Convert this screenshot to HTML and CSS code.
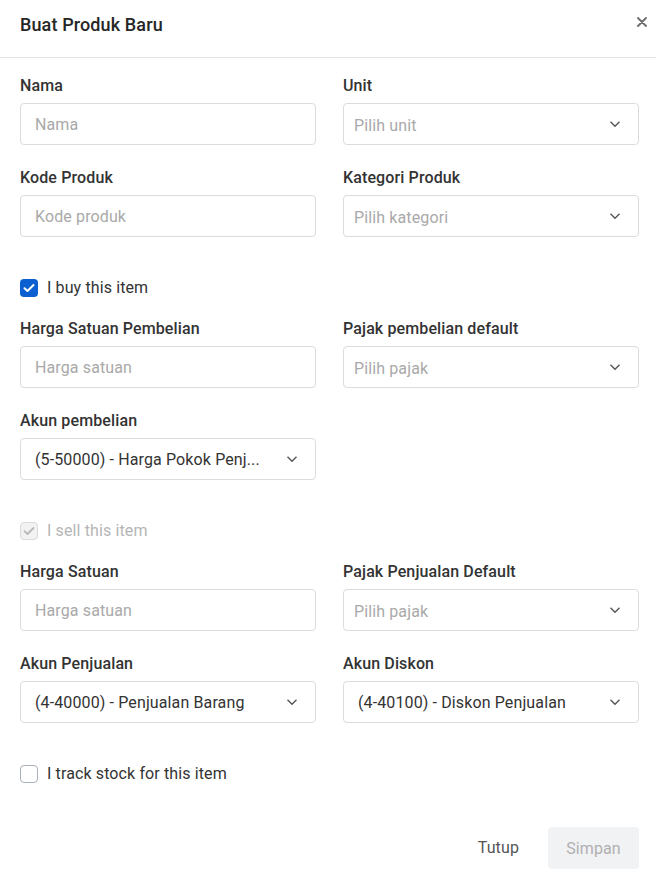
FILE: index.html
```html
<!DOCTYPE html>
<html lang="id">
<head>
<meta charset="utf-8">
<title>Buat Produk Baru</title>
<link rel="stylesheet" href="styles.css">
</head>
<body>
<div class="modal">
  <div class="modal-header">
    <h1 class="title">Buat Produk Baru</h1>
    <span class="close" aria-label="Close">
      <svg width="10" height="10" viewBox="0 0 10 10"><path d="M1 1L9 9M9 1L1 9" stroke="#6b6b6b" stroke-width="1.8" stroke-linecap="round"/></svg>
    </span>
  </div>
  <div class="modal-body">
    <div class="grid">
      <div class="field">
        <div class="label">Nama</div>
        <div class="control"><span class="ph">Nama</span></div>
      </div>
      <div class="field">
        <div class="label">Unit</div>
        <div class="control select"><span class="ph">Pilih unit</span><svg class="chev" width="12" height="8" viewBox="0 0 12 8"><path d="M1.5 1.8L6 6.2L10.5 1.8" fill="none" stroke="#555" stroke-width="1.4"/></svg></div>
      </div>
      <div class="field">
        <div class="label">Kode Produk</div>
        <div class="control"><span class="ph">Kode produk</span></div>
      </div>
      <div class="field">
        <div class="label">Kategori Produk</div>
        <div class="control select"><span class="ph">Pilih kategori</span><svg class="chev" width="12" height="8" viewBox="0 0 12 8"><path d="M1.5 1.8L6 6.2L10.5 1.8" fill="none" stroke="#555" stroke-width="1.4"/></svg></div>
      </div>
    </div>

    <div class="check-row">
      <span class="box checked"><svg width="12" height="10" viewBox="0 0 12 10"><path d="M1.5 5.2L4.5 8L10.5 2" fill="none" stroke="#fff" stroke-width="2" stroke-linecap="round" stroke-linejoin="round"/></svg></span>
      <span class="check-text">I buy this item</span>
    </div>

    <div class="grid after-check">
      <div class="field">
        <div class="label">Harga Satuan Pembelian</div>
        <div class="control"><span class="ph">Harga satuan</span></div>
      </div>
      <div class="field">
        <div class="label">Pajak pembelian default</div>
        <div class="control select"><span class="ph">Pilih pajak</span><svg class="chev" width="12" height="8" viewBox="0 0 12 8"><path d="M1.5 1.8L6 6.2L10.5 1.8" fill="none" stroke="#555" stroke-width="1.4"/></svg></div>
      </div>
      <div class="field">
        <div class="label">Akun pembelian</div>
        <div class="control select"><span class="val ellipsis">(5-50000) - Harga Pokok Penj...</span><svg class="chev" width="12" height="8" viewBox="0 0 12 8"><path d="M1.5 1.8L6 6.2L10.5 1.8" fill="none" stroke="#555" stroke-width="1.4"/></svg></div>
      </div>
    </div>

    <div class="check-row">
      <span class="box disabled"><svg width="12" height="10" viewBox="0 0 12 10"><path d="M1.5 5.2L4.5 8L10.5 2" fill="none" stroke="#b8b8b8" stroke-width="1.8" stroke-linecap="round" stroke-linejoin="round"/></svg></span>
      <span class="check-text muted">I sell this item</span>
    </div>

    <div class="grid after-check">
      <div class="field">
        <div class="label">Harga Satuan</div>
        <div class="control"><span class="ph">Harga satuan</span></div>
      </div>
      <div class="field">
        <div class="label">Pajak Penjualan Default</div>
        <div class="control select"><span class="ph">Pilih pajak</span><svg class="chev" width="12" height="8" viewBox="0 0 12 8"><path d="M1.5 1.8L6 6.2L10.5 1.8" fill="none" stroke="#555" stroke-width="1.4"/></svg></div>
      </div>
      <div class="field">
        <div class="label">Akun Penjualan</div>
        <div class="control select"><span class="val">(4-40000) - Penjualan Barang</span><svg class="chev" width="12" height="8" viewBox="0 0 12 8"><path d="M1.5 1.8L6 6.2L10.5 1.8" fill="none" stroke="#555" stroke-width="1.4"/></svg></div>
      </div>
      <div class="field">
        <div class="label">Akun Diskon</div>
        <div class="control select"><span class="val">(4-40100) - Diskon Penjualan</span><svg class="chev" width="12" height="8" viewBox="0 0 12 8"><path d="M1.5 1.8L6 6.2L10.5 1.8" fill="none" stroke="#555" stroke-width="1.4"/></svg></div>
      </div>
    </div>

    <div class="check-row">
      <span class="box empty"></span>
      <span class="check-text">I track stock for this item</span>
    </div>

    <div class="footer">
      <span class="btn-text">Tutup</span>
      <span class="btn-disabled">Simpan</span>
    </div>
  </div>
</div>
</body>
</html>
```
FILE: styles.css
```css
* { box-sizing: border-box; }
html, body { margin: 0; padding: 0; background: #fff; }
body {
  font-family: Roboto, "Noto Sans", sans-serif;
  color: #262626;
  width: 656px;
  letter-spacing: 0.12px;
}
.modal { width: 656px; }
.modal-header {
  height: 58px;
  border-bottom: 1px solid #e3e3e3;
  display: flex;
  align-items: flex-start;
  justify-content: space-between;
  padding: 0 9px 0 20px;
}
.title {
  margin: 0;
  font-size: 18px;
  font-weight: 500;
  line-height: 22px;
  padding-top: 14px;
  color: #262626;
}
.close {
  display: flex;
  padding-top: 17px;
}
.modal-body {
  padding: 18px 17px 21px 20px;
}
.grid {
  display: grid;
  grid-template-columns: 296px 296px;
  column-gap: 27px;
  row-gap: 23px;
}
.grid.after-check { margin-top: 21px; }
.field { display: flex; flex-direction: column; }
.label {
  font-size: 16px;
  font-weight: 500;
  line-height: 20px;
  color: #333;
  margin-bottom: 7px;
  padding-top: 1px;
  margin-top: -1px;
}
.control {
  height: 42px;
  border: 1px solid #dcdcdc;
  border-radius: 4px;
  display: flex;
  align-items: center;
  padding: 0 14px;
  font-size: 16px;
  background: #fff;
}
.control.select { padding: 0 17px 0 10px; justify-content: space-between; }
.control.select .val { padding-left: 4px; }
.ph { color: #a9a9a9; }
.control.select .ph { margin-top: 2px; }
.val { color: #333; }
.ellipsis { white-space: nowrap; overflow: hidden; }
.chev { flex: none; }
.check-row {
  display: flex;
  align-items: center;
  height: 20px;
  margin-top: 41px;
}
.box {
  width: 18px;
  height: 18px;
  border-radius: 4px;
  display: flex;
  align-items: center;
  justify-content: center;
  margin-right: 9px;
  flex: none;
}
.box.checked { background: #0b5fd0; }
.box.disabled { background: #f2f2f2; border: 1px solid #dadada; }
.box.empty { border: 1px solid #a8b0ba; background: #fff; }
.check-text { font-size: 16px; color: #333; line-height: 20px; }
.check-text.muted { color: #b5b5b5; }
.footer {
  margin-top: 43px;
  display: flex;
  justify-content: flex-end;
  align-items: center;
  gap: 10px;
}
.btn-text {
  font-size: 16px;
  color: #555;
  padding: 0 19px;
  line-height: 42px;
}
.btn-disabled {
  width: 91px;
  height: 42px;
  background: #f1f2f4;
  border-radius: 4px;
  color: #b0b0b0;
  font-size: 16px;
  display: flex;
  align-items: center;
  justify-content: center;
}
```
